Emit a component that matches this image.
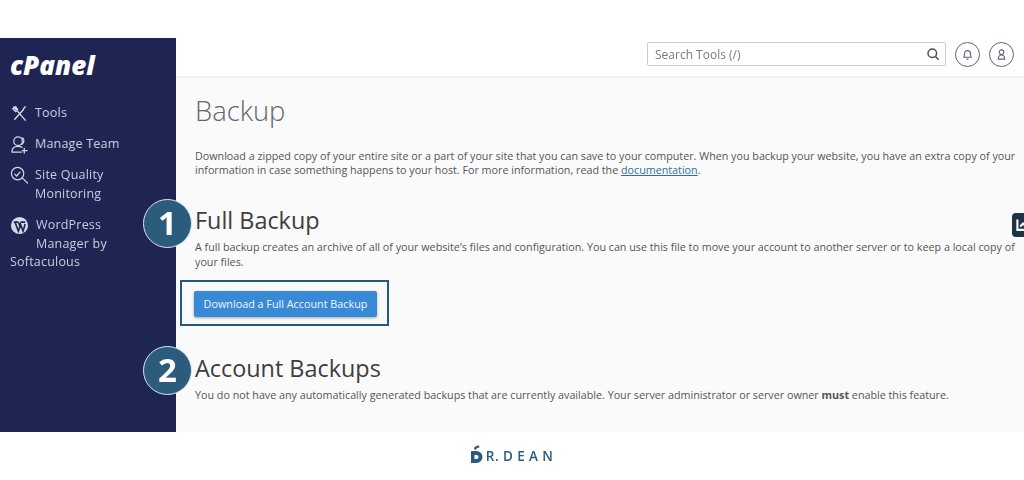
<script>
</script>

<div class="page">
  <div class="top"></div>
  <div class="shell">
    <aside class="side">
      <div class="logo">cPanel</div>
      <nav>
        <div class="item">
          <svg class="ic" viewBox="0 0 20 20" fill="none" stroke="#d5d8e6" stroke-width="1.500" stroke-linecap="round"><path d="M4 3l12 14M16 3c-1.500 1.500-2 2-2 3L5 16M3 5l3-2 2 3-2 2z"/></svg>
          <span>Tools</span>
        </div>
        <div class="item">
          <svg class="ic" viewBox="0 0 20 20" fill="none" stroke="#d5d8e6" stroke-width="1.300" stroke-linecap="round"><circle cx="8.500" cy="6.500" r="4.500"/><path d="M2 18c0-5 3-6 6.500-6 2 0 3 .4 4 1M2 18h10M13 3c2 .8 2.500 5-.5 7M15 14v5M13 16.500h5"/></svg>
          <span>Manage Team</span>
        </div>
        <div class="item">
          <svg class="ic" viewBox="0 0 20 20" fill="none" stroke="#d5d8e6" stroke-width="1.300" stroke-linecap="round"><circle cx="8" cy="8" r="6.500"/><path d="M5 8.500l2 2 3.500-4M13 12.500l5.500 5.500" /></svg>
          <span>Site Quality<br />Monitoring</span>
        </div>
        <div class="item wp">
          <svg class="ic" viewBox="0 0 20 20"><circle cx="10" cy="10" r="9" fill="#d5d8e6"/><path d="M4 6.500h5M11 6.500h5M5.500 7l3.300 9 1.700-5-1.300-4M10.500 7l3.200 9 2.300-7.500" fill="none" stroke="#1e2553" stroke-width="1.700"/></svg>
          <span class="wptext"><span class="hang2">WordPress<br />Manager by</span><br />Softaculous</span>
        </div>
      </nav>
    </aside>

    <div class="main">
      <header>
        <div class="search">
          <span>Search Tools (/)</span>
          <svg viewBox="0 0 14 14" fill="none" stroke="#4d5358" stroke-width="1.500" stroke-linecap="round"><circle cx="6.300" cy="6.300" r="4.300"/><path d="M9.500 9.500l2.800 2.800"/></svg>
        </div>
        <div class="round">
          <svg viewBox="0 0 14 14" fill="none" stroke="#5b6480" stroke-width="1.200"><path d="M3 10c.8-1 .8-2 .8-4a3.200 3.200 0 016.400 0c0 2 0 3 .8 4zM6 12h2"/></svg>
        </div>
        <div class="round">
          <svg viewBox="0 0 14 14" fill="none" stroke="#5b6480" stroke-width="1.200"><circle cx="7" cy="4.500" r="2.500"/><path d="M3.500 12c0-3 1.500-4.500 3.500-4.500s3.500 1.500 3.500 4.500z"/></svg>
        </div>
      </header>

      <main class="content">
        <h1>Backup</h1>
        <p class="intro">Download a zipped copy of your entire site or a part of your site that you can save to your computer. When you backup your website, you have an extra copy of your information in case something happens to your host. For more information, read the <a href="#doc">documentation</a>.</p>

        <h2>Full Backup</h2>
        <p class="desc">A full backup creates an archive of all of your website’s files and configuration. You can use this file to move your account to another server or to keep a local copy of your files.</p>
        <div class="frame"><button>Download a Full Account Backup</button></div>

        <h2 class="second">Account Backups</h2>
        <p class="desc">You do not have any automatically generated backups that are currently available. Your server administrator or server owner <b>must</b> enable this feature.</p>

        <div class="badge b1">1</div>
        <div class="badge b2">2</div>
        <div class="tab"><svg viewBox="0 0 10 10" fill="none" stroke="#fff" stroke-width="1.500"><path d="M1 1v7.500h8M3 6l2-2 1.500 1.500L9 3.500"/></svg></div>
      </main>
    </div>
  </div>
  <footer>
    <span class="brand"><svg viewBox="0 0 12 18"><path d="M3 4c0-2 2-3.500 5-3.500L8.500 2.500 6 3 5 5z" fill="#2c5a7c"/><path d="M0 6h5.500a6 6 0 010 12H0zM3.500 10v4h2a2 2 0 000-4z" fill="#2c5a7c" fill-rule="evenodd"/></svg><span class="r">R.</span><span class="dean">DEAN</span></span>
  </footer>
</div>

<style>
  :global(body) { margin: 0; background: #fff; }
  .page { width: 1024px; height: 480px; display: flex; flex-direction: column; overflow: hidden; font-family: "Open Sans", sans-serif; filter: blur(.35px); }
  .top { height: 38px; flex: none; }
  .shell { height: 394px; flex: none; display: flex; }
  .side { width: 176px; flex: none; background: #1e2553; color: #c9cddd; box-sizing: border-box; padding: 13px 0 0 10px; }
  .logo { font-family: "Open Sans", sans-serif; font-style: italic; font-weight: 800; font-size: 26px; line-height: 28px; color: #fff; }
  nav { margin-top: 25px; font-size: 12.500px; line-height: 18.500px; letter-spacing: 0.2px; }
  .item { display: flex; align-items: flex-start; gap: 6px; margin-bottom: 12px; }
  .ic { width: 19px; height: 19px; flex: none; }
  .wp { display: block; position: relative; margin-top: 13px; }
  .wp .ic { position: absolute; left: 0; top: 0; }
  .hang2 { display: inline-block; padding-left: 26px; }
  .wptext { display: block; }
  .main { flex: 1; display: flex; flex-direction: column; min-width: 0; }
  header { height: 40px; flex: none; box-sizing: border-box; background: #fff; border-bottom: 2px solid #f0f0f0; display: flex; align-items: center; padding: 0 10px 6px 471px; gap: 9px; }
  .search { width: 299px; height: 24px; box-sizing: border-box; border: 1px solid #c9ccd2; border-radius: 2px; display: flex; align-items: center; justify-content: space-between; padding: 0 5px 0 7px; font-size: 12px; color: #767b80; }
  .search svg { width: 14px; height: 14px; }
  .round { width: 25px; height: 25px; box-sizing: border-box; border: 1px solid #5b6480; border-radius: 50%; display: flex; align-items: center; justify-content: center; }
  .round svg { width: 13px; height: 13px; }
  .content { flex: 1; position: relative; background: #fafafa; padding: 14px 0 0 19px; color: #555; font-size: 10.740px; line-height: 14px; }
  h1 { margin: 0; font-size: 27.400px; font-weight: 300; line-height: 38px; color: #666; }
  .intro { margin: 19px 0 0; width: 826px; }
  h2 { margin: 28px 0 0; font-size: 23.400px; font-weight: 400; line-height: 30px; color: #3e3e3e; }
  .desc { margin: 5px 0 0; width: 826px; line-height: 14.500px; }
  a { color: #2f6ea5; }
  .frame { display: inline-block; margin: 11px 0 0 -15px; border: 2px solid #24597c; padding: 9px 10px 7px 12px; }
  button { display: block; width: 183px; height: 26px; padding: 0; border: 0; border-radius: 2px; background: #398ad6; color: #f1f6fb; font: 10.800px/26px "Open Sans", sans-serif; box-shadow: 0 1px 3px rgba(0,0,0,.35); }
  .second { margin-top: 27px; }
  .badge { position: absolute; left: -33px; width: 49px; height: 49px; box-sizing: border-box; border: 1.500px solid #dce8ee; border-radius: 50%; background: #2b5c7c; color: #fff; font: 700 33px/45px "Open Sans", sans-serif; text-align: center; }
  .b1 { top: 121px; }
  .b2 { top: 268px; }
  .tab { position: absolute; right: 0; top: 135px; width: 12px; height: 24px; background: #1f3346; border-radius: 4px 0 0 4px; overflow: hidden; display: flex; align-items: center; box-sizing: border-box; }
  .tab svg { width: 14px; height: 14px; flex: none; margin-left: 4px; }
  footer { flex: 1; display: flex; justify-content: center; padding-top: 13px; }
  .brand { display: flex; align-items: flex-end; height: 18px; color: #2c5a7c; font-weight: 600; font-size: 13.500px; line-height: 14px; margin-right: -4px; }
  .brand svg { width: 12px; height: 18px; }
  .r { margin-left: 3px; letter-spacing: .5px; }
  .dean { margin-left: 4px; letter-spacing: 4.300px; }
</style>
